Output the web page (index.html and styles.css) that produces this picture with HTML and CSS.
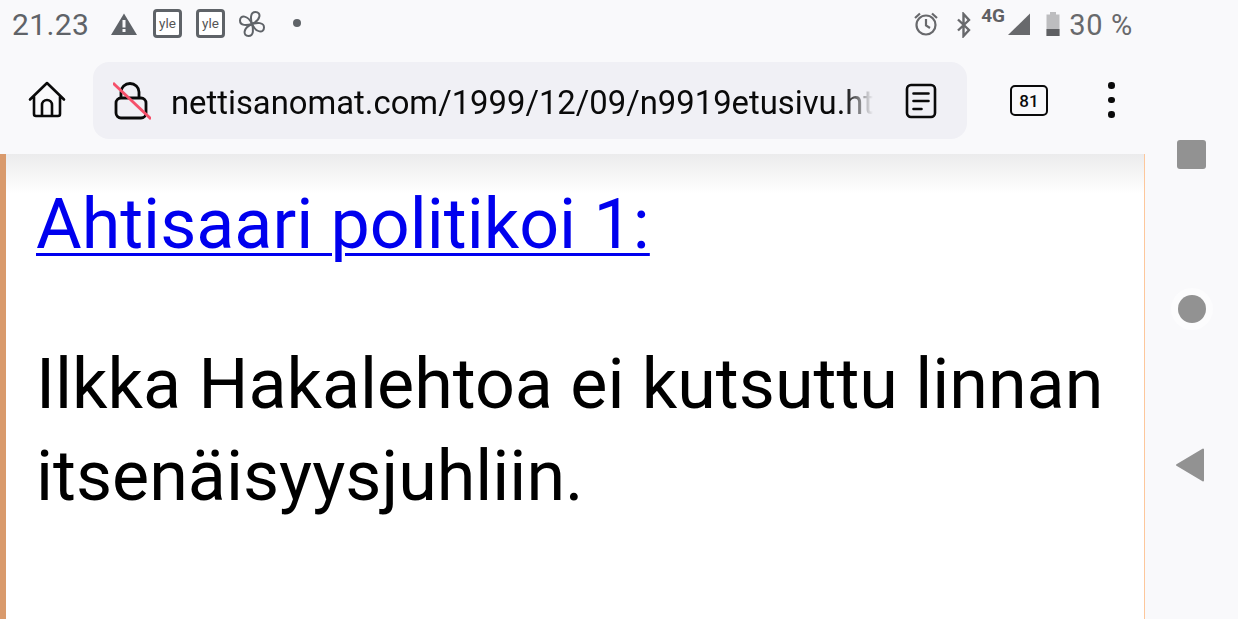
FILE: index.html
```html
<!DOCTYPE html>
<html lang="fi">
<head>
<meta charset="utf-8">
<title>Ahtisaari politikoi 1</title>
<link rel="stylesheet" href="styles.css">
</head>
<body>
<div class="screen">
  <div class="main">
    <header class="status">
      <span class="time">21.23</span>
      <svg class="ic-warn" width="28" height="24" viewBox="0 0 28 24"><path fill="#5f6368" d="M14 1.500 27 23H1z"/><rect x="12.500" y="8" width="3" height="7.500" fill="#f9f9fb"/><rect x="12.500" y="17" width="3" height="3" fill="#f9f9fb"/></svg>
      <span class="yle">yle</span>
      <span class="yle">yle</span>
      <svg class="ic-fan" width="30" height="30" viewBox="0 0 30 30" fill="none" stroke="#5f6368" stroke-width="2" stroke-linejoin="round"><path d="M15 15C13.500 10 13 3 18.500 3 24.500 3 24 11 15 15Z"/><path transform="rotate(90 15 15)" d="M15 15C13.500 10 13 3 18.500 3 24.500 3 24 11 15 15Z"/><path transform="rotate(180 15 15)" d="M15 15C13.500 10 13 3 18.500 3 24.500 3 24 11 15 15Z"/><path transform="rotate(270 15 15)" d="M15 15C13.500 10 13 3 18.500 3 24.500 3 24 11 15 15Z"/></svg>
      <span class="dot"></span>
      <span class="status-right">
        <svg class="ic-alarm" width="28" height="28" viewBox="0 0 28 28" fill="none" stroke="#68696c" stroke-width="2.200"><circle cx="14" cy="15" r="9.500"/><path d="M14 9v6.500l4 2.500M3 8l5-4.500M25 8l-5-4.500"/></svg>
        <svg class="ic-bt" width="20" height="26" viewBox="0 0 20 26" fill="none" stroke="#68696c" stroke-width="2.400"><path d="M4 7.500 15 18 9.500 24V2L15 8 4 18.500"/></svg>
        <span class="net">4G</span>
        <svg class="ic-signal" width="24" height="24" viewBox="0 0 24 24"><path fill="#68696c" d="M23 1.500V23H1z"/></svg>
        <svg class="ic-batt" width="16" height="26" viewBox="0 0 16 26"><path fill="#bdbdbf" d="M5 1h6v2.500h3.500V25H1.500V3.500H5z"/><rect x="1.500" y="18" width="13" height="7" fill="#5f6063"/></svg>
        <span class="pct">30 %</span>
      </span>
    </header>
    <nav class="toolbar">
      <svg class="ic-home" width="38" height="38" viewBox="0 0 38 38" fill="none" stroke="#0a0a0a" stroke-width="2.600" stroke-linejoin="round" stroke-linecap="round"><path d="M2 18.500 19 2l17 16.500M6 15.500V33a2 2 0 0 0 2 2h22a2 2 0 0 0 2-2V15.500M14 35V24a5 5 0 0 1 10 0v11"/></svg>
      <div class="omnibox">
        <svg class="ic-lock" width="38" height="38" viewBox="0 0 38 38" fill="none"><path stroke="#0a0a0a" stroke-width="2.800" d="M8 16V10a9 8.500 0 0 1 18 0v6"/><rect x="3" y="16" width="30" height="20" rx="5" stroke="#0a0a0a" stroke-width="2.800"/><path stroke="#f5506a" stroke-width="2.800" d="M0 1 38 37"/></svg>
        <span class="url">nettisanomat.com/1999/12/09/n9919etusivu.htm</span>
        <svg class="ic-reader" width="32" height="36" viewBox="0 0 32 36" fill="none" stroke="#0a0a0a" stroke-width="2.600" stroke-linecap="round"><rect x="2" y="2" width="28" height="32" rx="4"/><path d="M8.500 10.500h15M8.500 18h15M8.500 26h8"/></svg>
      </div>
      <span class="tabs">81</span>
      <span class="menu"><i></i><i></i><i></i></span>
    </nav>
    <main class="page">
      <a class="headline" href="#">Ahtisaari politikoi 1:</a>
      <p class="lead">Ilkka Hakalehtoa ei kutsuttu linnan itsenäisyysjuhliin.</p>
    </main>
  </div>
  <aside class="rail">
    <span class="nav-square"></span>
    <span class="nav-circle"></span>
    <svg class="nav-back" width="30" height="34" viewBox="0 0 30 34"><path fill="#929292" stroke="#929292" stroke-width="2" stroke-linejoin="round" d="M2 17 28 1.500v31z"/></svg>
  </aside>
</div>
</body>
</html>
```
FILE: styles.css
```css
* { box-sizing: border-box; }
html, body { margin: 0; height: 100%; overflow: hidden; }
body { font-family: Roboto, "Liberation Sans", sans-serif; background: #f9f9fb; }
svg { display: block; flex: none; }
.screen { display: flex; width: 1238px; height: 619px; }
.main { width: 1145px; display: flex; flex-direction: column; }
.status { height: 49px; display: flex; align-items: center; padding-left: 12px; color: #5f6368; }
.time { font-size: 30px; width: 98px; letter-spacing: .4px; }
.ic-warn { margin-right: 15px; margin-top: -1px; }
.yle { width: 29px; height: 29px; border: 3px solid #5f6368; border-radius: 4px; margin-right: 14px; background: #fff; font-size: 13.500px; display: flex; align-items: center; justify-content: center; color: #555; margin-top: -3px; }
.ic-fan { margin-left: -2px; margin-top: -1px; }
.dot { width: 8px; height: 8px; border-radius: 50%; background: #5f6368; margin-left: 26px; margin-top: -3px; }
.status-right { margin-left: auto; display: flex; align-items: center; padding-right: 12px; color: #68696c; }
.ic-alarm { margin-right: 14px; margin-top: -1px; }
.ic-bt { margin-right: 7px; }
.net { font-size: 19px; font-weight: 700; width: 26px; margin-top: -19px; color: #5f6063; }
.ic-signal { margin-right: 14px; margin-left: 0; margin-top: -2px; }
.ic-batt { margin-right: 8px; margin-top: -1px; }
.pct { font-size: 29px; letter-spacing: .7px; }
.toolbar { height: 105px; display: flex; align-items: center; padding: 0 0 0 28px; background: #f9f9fb; position: relative; z-index: 1; }
.ic-home { margin-right: 27px; margin-top: -3px; }
.omnibox { width: 874px; height: 77px; margin-top: -2px; border-radius: 16px; background: #f0f0f5; display: flex; align-items: center; padding-left: 20px; }
.url { font-size: 32.800px; margin-left: 20px; margin-top: 4px; width: 702px; white-space: nowrap; overflow: hidden; color: #0a0a0a; -webkit-mask-image: linear-gradient(to right, #000 96%, transparent); mask-image: linear-gradient(to right, #000 96%, transparent); }
.ic-reader { margin-left: 32px; }
.tabs { width: 38px; height: 31px; margin-left: 43px; margin-top: -2px; border: 2.500px solid #0a0a0a; border-radius: 5px; font-size: 17px; font-weight: 500; display: flex; align-items: center; justify-content: center; color: #0a0a0a; }
.menu { display: flex; flex-direction: column; gap: 8px; margin-left: 60px; margin-top: -3px; }
.menu i { width: 6.500px; height: 6.500px; border-radius: 50%; background: #0a0a0a; display: block; }
.page { flex: 1; background: #fff; border-left: 6px solid #d99a6c; border-right: 1px solid #fdc79b; padding: 21px 0 0 30px; position: relative; }
.page::before { content: ""; position: absolute; inset: 0 0 auto 0; height: 40px; background: linear-gradient(#ebebec, #ffffff); }
.headline { position: relative; font-size: 70px; color: #0000ee; line-height: 98px; display: block; text-decoration-thickness: 2.500px; text-underline-offset: 5px; }
.lead { margin: 0; padding-top: 65px; font-size: 70px; line-height: 92px; color: #000; }
.rail { flex: 1; display: flex; flex-direction: column; align-items: center; padding: 140px 0 0 0; }
.nav-square { width: 29px; height: 29px; background: #929292; border-radius: 3px; }
.nav-circle { width: 28px; height: 28px; background: #929292; border-radius: 50%; margin-top: 126px; box-shadow: 0 0 0 7px #fcfcfd; }
.nav-back { margin-top: 125px; margin-left: -4px; }
```
